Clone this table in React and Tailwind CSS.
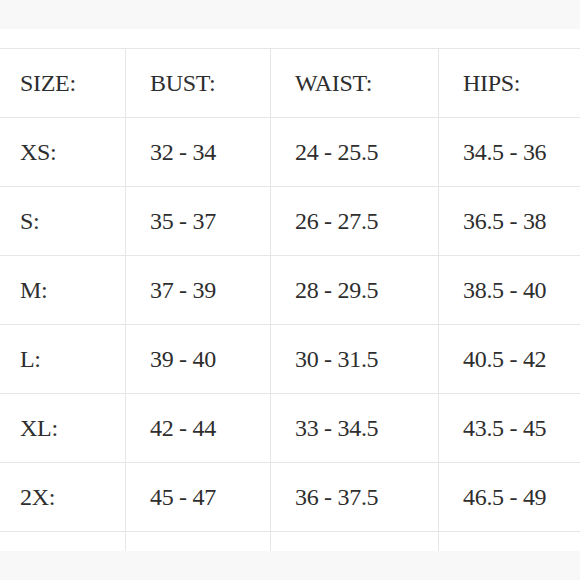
import React from 'react'

const rows = [
  ['SIZE:', 'BUST:', 'WAIST:', 'HIPS:'],
  ['XS:', '32 - 34', '24 - 25.5', '34.5 - 36'],
  ['S:', '35 - 37', '26 - 27.5', '36.5 - 38'],
  ['M:', '37 - 39', '28 - 29.5', '38.5 - 40'],
  ['L:', '39 - 40', '30 - 31.5', '40.5 - 42'],
  ['XL:', '42 - 44', '33 - 34.5', '43.5 - 45'],
  ['2X:', '45 - 47', '36 - 37.5', '46.5 - 49'],
]

function SizeChart() {
  return (
    <div className="w-[580px] h-[580px] bg-white overflow-hidden flex flex-col font-['Liberation_Serif',serif] text-[#2e2e2e]">
      <div className="h-[29px] bg-[#f8f8f8] shrink-0" />
      <div className="h-[19px] shrink-0" />
      <div className="grid grid-cols-[125px_145px_168px_1fr] border-t border-[#e6e6e6]">
        {rows.map((row, i) =>
          row.map((cell, j) => (
            <div
              key={i + '-' + j}
              className={`h-[69px] flex items-center border-b border-[#e6e6e6] text-[24px] tracking-[-0.3px] ${
                j === 0 ? 'pl-5' : 'pl-6 border-l'
              }`}
            >
              {cell}
            </div>
          ))
        )}
        <div className="h-[19px]" />
        <div className="h-[19px] border-l border-[#e6e6e6]" />
        <div className="h-[19px] border-l border-[#e6e6e6]" />
        <div className="h-[19px] border-l border-[#e6e6e6]" />
      </div>
      <div className="flex-1 bg-[#f8f8f8]" />
    </div>
  )
}

export default function App() {
  return <SizeChart />
}
